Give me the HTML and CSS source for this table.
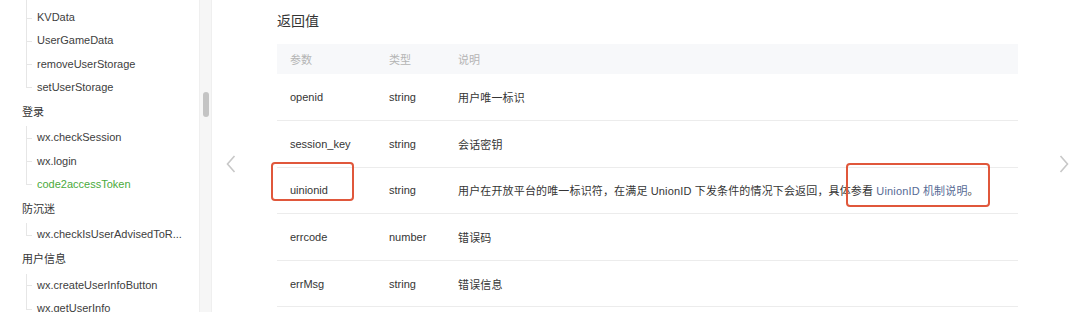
FILE: index.html
```html
<!DOCTYPE html>
<html lang="zh-CN">
<head>
<meta charset="utf-8">
<title>code2accessToken</title>
<link rel="stylesheet" href="styles.css">
</head>
<body>
<div class="page">
  <aside class="sidebar">
    <nav class="menu">
      <ul class="group">
        <li class="item">wx.setUserCloudStorage</li>
        <li class="item">KVData</li>
        <li class="item">UserGameData</li>
        <li class="item">removeUserStorage</li>
        <li class="item">setUserStorage</li>
      </ul>
      <div class="section">登录</div>
      <ul class="group">
        <li class="item">wx.checkSession</li>
        <li class="item">wx.login</li>
        <li class="item active">code2accessToken</li>
      </ul>
      <div class="section">防沉迷</div>
      <ul class="group">
        <li class="item">wx.checkIsUserAdvisedToR...</li>
      </ul>
      <div class="section">用户信息</div>
      <ul class="group">
        <li class="item">wx.createUserInfoButton</li>
        <li class="item">wx.getUserInfo</li>
      </ul>
    </nav>
  </aside>
  <div class="scroll-track"><div class="scroll-thumb"></div></div>

  <main class="main">
    <div class="pager pager-prev">
      <svg width="10" height="18" viewBox="0 0 10 18"><path d="M8.5 1 L1.5 9 L8.5 17" fill="none" stroke="#c8c8c8" stroke-width="1.6"/></svg>
    </div>

    <section class="content">
      <h3 class="title">返回值</h3>
      <table class="params">
        <thead>
          <tr><th class="c-name">参数</th><th class="c-type">类型</th><th>说明</th></tr>
        </thead>
        <tbody>
          <tr><td>openid</td><td>string</td><td class="desc">用户唯一标识</td></tr>
          <tr><td>session_key</td><td>string</td><td class="desc">会话密钥</td></tr>
          <tr><td><span class="mark mark-name">uinionid</span></td><td>string</td><td class="desc">用户在开放平台的唯一标识符，在满足 UnionID 下发条件的情况下会返回，具体参看 <span class="mark mark-link"><a class="link">UinionID 机制说明</a>。</span></td></tr>
          <tr><td>errcode</td><td>number</td><td class="desc">错误码</td></tr>
          <tr><td>errMsg</td><td>string</td><td class="desc">错误信息</td></tr>
        </tbody>
      </table>
    </section>

    <div class="pager pager-next">
      <svg width="10" height="18" viewBox="0 0 10 18"><path d="M1.5 1 L8.5 9 L1.5 17" fill="none" stroke="#c8c8c8" stroke-width="1.6"/></svg>
    </div>
  </main>
</div>
</body>
</html>
```

FILE: styles.css
```css
* { box-sizing: border-box; }

html, body {
  margin: 0;
  padding: 0;
  background: #fff;
}

body {
  font-family: "Liberation Sans", "Noto Sans CJK SC", sans-serif;
  font-size: 11px;
  color: #353535;
  overflow: hidden;
}

.page {
  display: flex;
  height: 312px;
  overflow: hidden;
}

/* ---------- sidebar ---------- */
.sidebar {
  width: 199px;
  flex: none;
  overflow: hidden;
}

.menu {
  margin-top: -17px;
}

.group {
  list-style: none;
  margin: 0;
  padding: 0;
}

.section {
  height: 27.4px;
  line-height: 27.4px;
  padding-left: 22px;
  color: #353535;
}

.item {
  position: relative;
  height: 23.2px;
  line-height: 23.2px;
  padding-left: 37px;
  white-space: nowrap;
  color: #404040;
}

/* tree guide: vertical rail and a tick at every entry */
.item::before {
  content: "";
  position: absolute;
  left: 26px;
  top: 0;
  bottom: 0;
  border-left: 1px solid #e6e6e6;
}

.item:last-child::before {
  bottom: 50%;
}

.item::after {
  content: "";
  position: absolute;
  left: 26px;
  top: 50%;
  width: 6px;
  border-top: 1px solid #e6e6e6;
}

.item.active {
  color: #4aaa3c;
}

.scroll-track {
  width: 13px;
  flex: none;
  background: #f6f6f6;
  border-left: 1px solid #efefef;
  border-right: 1px solid #efefef;
  padding: 92px 0 0 3px;
}

.scroll-thumb {
  width: 6px;
  height: 25px;
  border-radius: 3px;
  background: #c4c4c4;
}

/* ---------- main ---------- */
.main {
  flex: 1;
  display: flex;
  min-width: 0;
}

.pager {
  flex: none;
  padding-top: 155px;
}

.pager-prev {
  width: 65px;
  padding-left: 14px;
}

.pager-next {
  flex: 1;
  padding-left: 41px;
}

.content {
  width: 741px;
  flex: none;
  padding-top: 11px;
}

.title {
  margin: 0 0 13px;
  font-size: 14px;
  line-height: 20px;
  font-weight: normal;
  color: #353535;
}

.params {
  width: 741px;
  border-collapse: collapse;
  table-layout: fixed;
}

.params th,
.params td {
  text-align: left;
  padding: 0 0 0 13px;
  vertical-align: middle;
  white-space: nowrap;
}

.params .c-name { width: 99px; }
.params .c-type { width: 69px; }

.params thead tr {
  background: #f7f8fa;
}

.params th {
  height: 30px;
  font-weight: normal;
  color: #b4b4b4;
}

.params td {
  height: 46.6px;
  border-bottom: 1px solid #ececec;
  color: #353535;
}

.params .desc {
  letter-spacing: 0.15px;
}

.link {
  color: #576b95;
  text-decoration: none;
}

/* red annotation frames */
.mark {
  position: relative;
}

.mark::after {
  content: "";
  position: absolute;
  border: 2px solid #e0573b;
  border-radius: 4px;
}

.mark-name::after {
  left: -19px;
  right: -26px;
  top: -22px;
  bottom: -5px;
}

.mark-link::after {
  left: -30px;
  right: -11px;
  top: -22px;
  bottom: -10px;
}
```
